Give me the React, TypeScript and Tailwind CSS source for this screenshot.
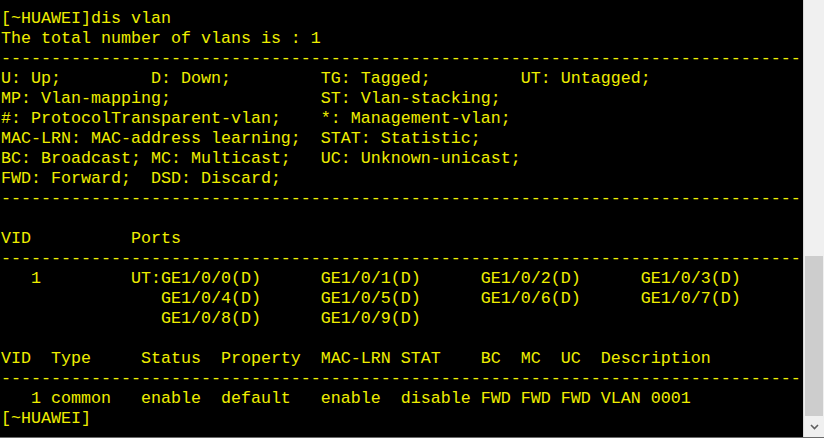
const dash = "-".repeat(80)

const lines = [
    "[~HUAWEI]dis vlan",
    "The total number of vlans is : 1",
    dash,
    "U: Up;         D: Down;         TG: Tagged;         UT: Untagged;",
    "MP: Vlan-mapping;               ST: Vlan-stacking;",
    "#: ProtocolTransparent-vlan;    *: Management-vlan;",
    "MAC-LRN: MAC-address learning;  STAT: Statistic;",
    "BC: Broadcast; MC: Multicast;   UC: Unknown-unicast;",
    "FWD: Forward;  DSD: Discard;",
    dash,
    "",
    "VID          Ports",
    dash,
    "   1         UT:GE1/0/0(D)      GE1/0/1(D)      GE1/0/2(D)      GE1/0/3(D)",
    "                GE1/0/4(D)      GE1/0/5(D)      GE1/0/6(D)      GE1/0/7(D)",
    "                GE1/0/8(D)      GE1/0/9(D)",
    "",
    "VID  Type     Status  Property  MAC-LRN STAT    BC  MC  UC  Description",
    dash,
    "   1 common   enable  default   enable  disable FWD FWD FWD VLAN 0001",
    "[~HUAWEI]",
]

function Scrollbar() {
    return (
        <div className="w-[21px] flex flex-col bg-[#f0f0f0] border-l border-[#d9d9d9]">
            <div className="h-[256px]" />
            <div className="mx-[1px] h-[160px] bg-[#cdcdcd]" />
            <div className="flex-1 flex items-center justify-center">
                <svg width="9" height="6" viewBox="0 0 9 6" fill="none">
                    <path d="M1 1l3.5 3.5L8 1" stroke="#606060" strokeWidth="1.6" />
                </svg>
            </div>
        </div>
    )
}

export default function App() {
    return (
        <div className="w-[824px] h-[438px] flex flex-col bg-black overflow-hidden">
            <div className="flex h-[437px]">
                <div className="w-[803px] bg-black pt-[9px] pl-[1px] overflow-hidden">
                    {lines.map((line, i) => (
                        <div
                            key={i}
                            className="h-[20px] leading-[20px] whitespace-pre text-[16.667px] text-[#eeee00] font-['Liberation_Mono','Courier_New',monospace]"
                        >
                            {line}
                        </div>
                    ))}
                </div>
                <Scrollbar />
            </div>
            <div className="h-[1px] bg-[#6b6b6b]" />
        </div>
    )
}
